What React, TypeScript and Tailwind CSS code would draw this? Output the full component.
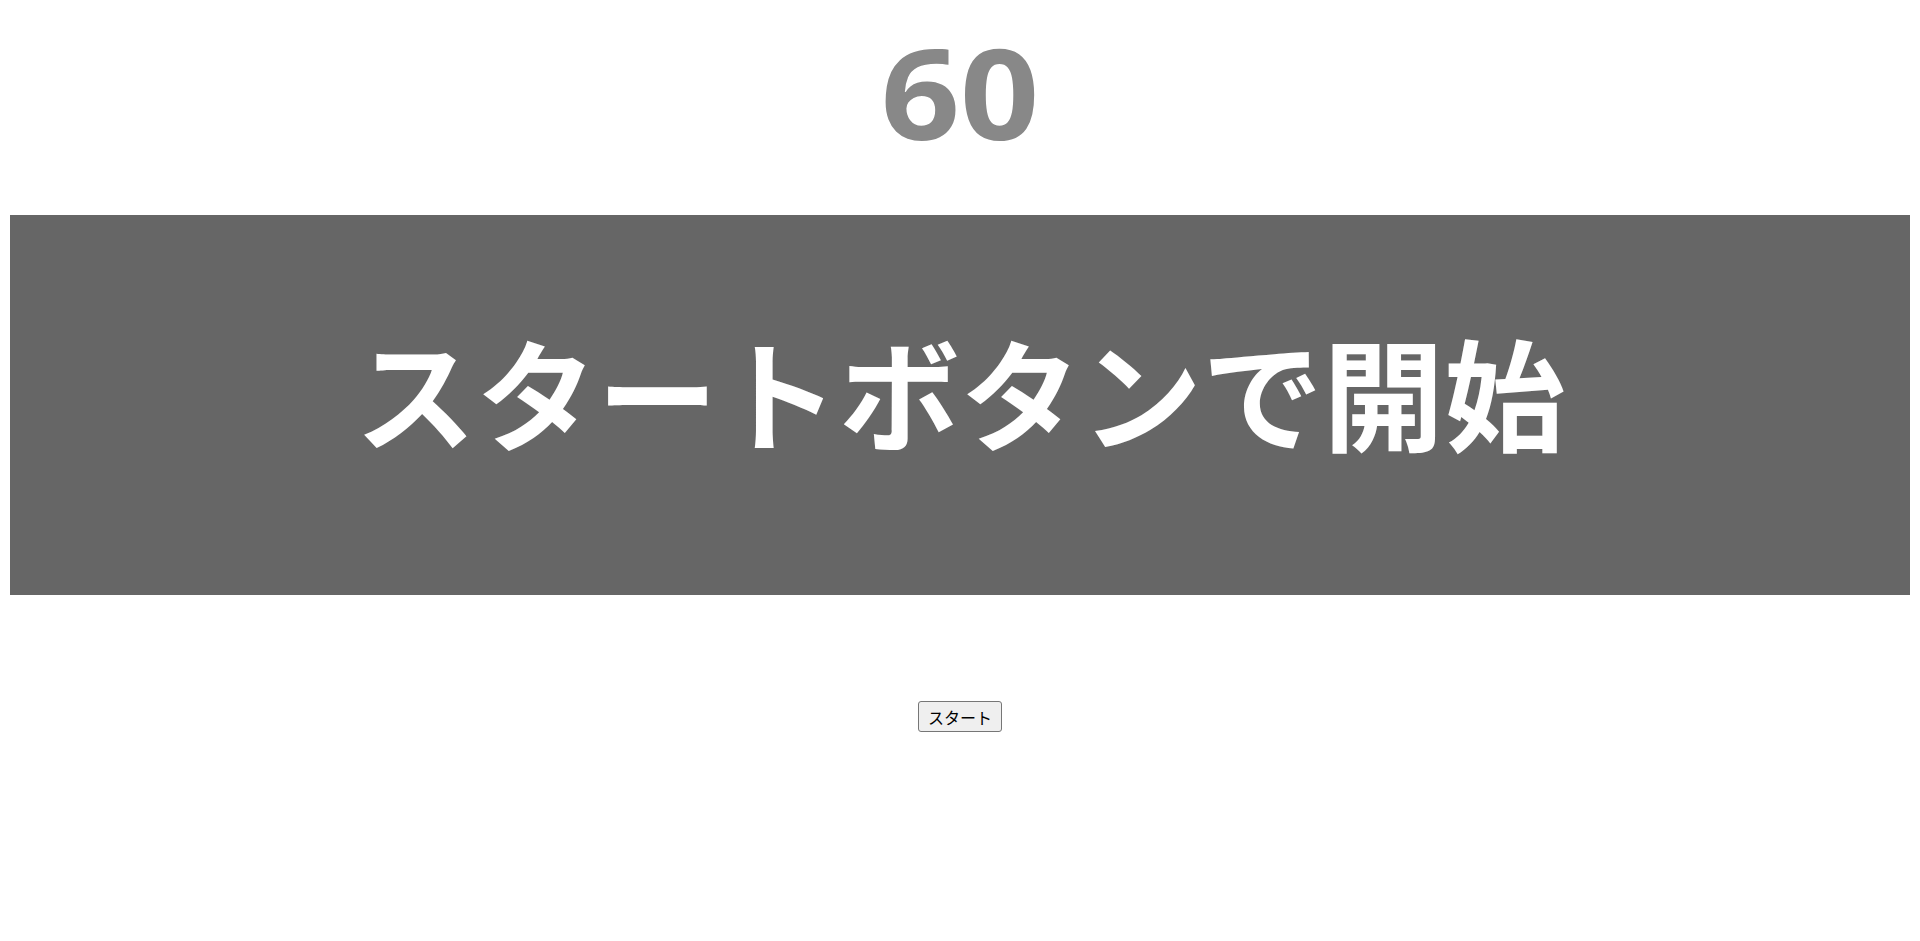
export default function App() {
  return (
    <div className="min-h-screen bg-white">
      <div className="flex h-[215px] items-center justify-center pb-[34px]">
        <h1 className="scale-x-110 font-['Open_Sans',sans-serif] text-[126px] font-bold leading-none text-[#888888]">60</h1>
      </div>
      <div className="mx-[10px] flex h-[380px] items-center justify-center bg-[#666666]">
        <p className="pb-[32px] font-['Noto_Sans_CJK_JP',sans-serif] text-[121px] font-bold leading-none text-white">
          スタートボタンで開始
        </p>
      </div>
      <div className="mt-[106px] flex justify-center">
        <button className="h-[31px] rounded-[3px] border border-[#767676] bg-[#efefef] px-[9px] font-['Noto_Sans_CJK_JP',sans-serif] text-[16px] leading-none text-black">
          スタート
        </button>
      </div>
    </div>
  );
}
